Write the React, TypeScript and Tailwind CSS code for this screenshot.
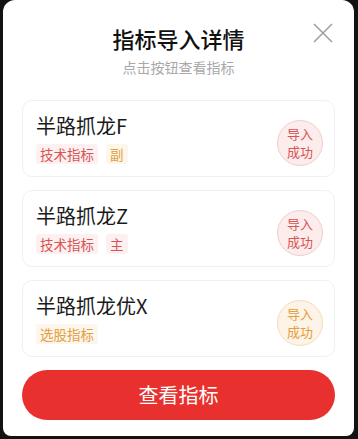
import React from "react";

const cards = [
  {
    title: "半路抓龙F",
    tags: [
      { text: "技术指标", cls: "bg-[#fdf0f0] text-[#d65555]" },
      { text: "副", cls: "bg-[#fdf6ec] text-[#e2a040]" },
    ],
    badge: "bg-[#fcecec] border-[#f3cccc] text-[#d65555]",
  },
  {
    title: "半路抓龙Z",
    tags: [
      { text: "技术指标", cls: "bg-[#fdf0f0] text-[#d65555]" },
      { text: "主", cls: "bg-[#fdf0f0] text-[#d65555]" },
    ],
    badge: "bg-[#fcecec] border-[#f3cccc] text-[#d65555]",
  },
  {
    title: "半路抓龙优X",
    tags: [{ text: "选股指标", cls: "bg-[#fdf6ec] text-[#e2a040]" }],
    badge: "bg-[#fdf3e6] border-[#f3dcc0] text-[#e2a040]",
  },
];

export default function App() {
  return (
    <div
      className="w-[358px] h-[439px] bg-[#141210] overflow-hidden"
      style={{ fontFamily: '"Noto Sans CJK SC", "Noto Sans", sans-serif' }}
    >
      <div className="relative ml-[3px] w-[351px] h-[436px] bg-white rounded-t-[12px] rounded-b-[8px] px-[19px] flex flex-col">
        <button className="absolute right-[21px] top-[23px] w-[20px] h-[20px]">
          <svg width="20" height="20" viewBox="0 0 20 20">
            <path d="M1 1 L19 19 M19 1 L1 19" stroke="#a0a0a0" strokeWidth="1.6" fill="none" />
          </svg>
        </button>
        <div className="pt-[24px] text-center text-[22px] leading-[28px] font-medium text-[#111]">指标导入详情</div>
        <div className="mt-[6px] text-center text-[14px] leading-[18px] text-[#a8a8a8]">点击按钮查看指标</div>
        <div className="mt-[24px] flex flex-col gap-[13px]">
          {cards.map((c) => (
            <div
              key={c.title}
              className="h-[77px] rounded-[10px] border border-[#f0f0f0] flex items-center pl-[13px] pr-[11px]"
            >
              <div className="flex-1 flex flex-col">
                <div className="text-[20px] leading-[24px] text-[#1a1a1a]">{c.title}</div>
                <div className="mt-[6px] flex gap-[8px]">
                  {c.tags.map((t) => (
                    <span
                      key={t.text}
                      className={`px-[4px] h-[20px] flex items-center text-[13.5px] leading-[16px] rounded-[3px] ${t.cls}`}
                    >
                      {t.text}
                    </span>
                  ))}
                </div>
              </div>
              <div
                className={`mt-[8px] w-[46px] h-[46px] rounded-full border flex flex-col items-center justify-center text-center text-[13px] leading-[18px] ${c.badge}`}
              >
                <span>导入</span>
                <span>成功</span>
              </div>
            </div>
          ))}
        </div>
        <button className="mt-[13px] h-[50px] w-full rounded-full bg-[#e8302e] text-white text-[20px]">
          查看指标
        </button>
      </div>
    </div>
  );
}
